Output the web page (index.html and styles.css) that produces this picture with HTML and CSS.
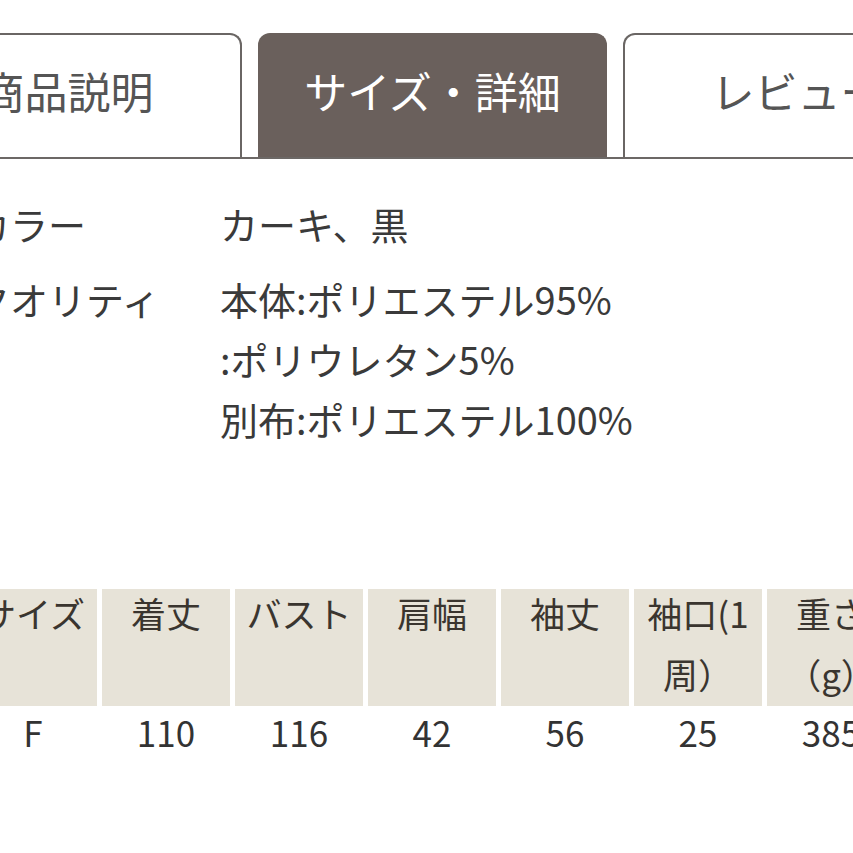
FILE: index.html
```html
<!DOCTYPE html>
<html lang="ja">
<head>
<meta charset="utf-8">
<title>サイズ・詳細</title>
<link rel="stylesheet" href="styles.css">
</head>
<body>
<div class="page">
  <div class="tabs">
    <div class="tab">商品説明</div>
    <div class="tab active">サイズ・詳細</div>
    <div class="tab">レビュー</div>
  </div>

  <dl class="info">
    <dt class="label">カラー</dt>
    <dd class="value">カーキ、黒</dd>
    <dt class="label">クオリティ</dt>
    <dd class="value">本体:ポリエステル95%<br>:ポリウレタン5%<br>別布:ポリエステル100%</dd>
  </dl>

  <table class="size-table">
    <thead>
      <tr>
        <th><span class="th-text">サイズ</span></th>
        <th><span class="th-text">着丈</span></th>
        <th><span class="th-text">バスト</span></th>
        <th><span class="th-text">肩幅</span></th>
        <th><span class="th-text">袖丈</span></th>
        <th><span class="th-text">袖口(1周）</span></th>
        <th><span class="th-text">重さ（g）</span></th>
      </tr>
    </thead>
    <tbody>
      <tr>
        <td>F</td>
        <td>110</td>
        <td>116</td>
        <td>42</td>
        <td>56</td>
        <td>25</td>
        <td>385</td>
      </tr>
    </tbody>
  </table>
</div>
</body>
</html>
```

FILE: styles.css
```css
html, body {
  margin: 0;
  padding: 0;
  background: #ffffff;
  overflow: hidden;
}

body {
  font-family: "Noto Sans CJK JP", "Noto Sans", sans-serif;
  color: #3a3a3a;
}

.page {
  width: 1150px;
  margin-left: -107px;
  padding-top: 33px;
}

/* Tabs */
.tabs {
  display: flex;
  gap: 16px;
  border-bottom: 2px solid #6c6866;
}

.tab {
  flex: 0 0 349px;
  height: 124px;
  box-sizing: border-box;
  border: 2px solid #6a6664;
  border-bottom: none;
  border-radius: 12px 12px 0 0;
  display: flex;
  align-items: center;
  justify-content: center;
  font-size: 43px;
  color: #555555;
  padding-bottom: 12px;
}

.tab.active {
  background: #6a605c;
  border-color: #6a605c;
  color: #ffffff;
}

/* Info */
.info {
  display: grid;
  grid-template-columns: 248px 1fr;
  row-gap: 15px;
  margin: 35px 0 0 79px;
  font-size: 38px;
  line-height: 60px;
  color: #3a3a3a;
}

.info dt,
.info dd {
  margin: 0;
  white-space: nowrap;
}

/* Size table */
.size-table {
  margin: 135px 0 0 71px;
  border-collapse: separate;
  border-spacing: 5px;
  table-layout: fixed;
  color: #3a352f;
}

.size-table th {
  width: 128px;
  height: 117px;
  box-sizing: border-box;
  padding: 0 6px;
  background: #e7e3d8;
  vertical-align: top;
  font-weight: normal;
  font-size: 35px;
  line-height: 61px;
  text-align: center;
}

.th-text {
  display: block;
  margin-top: -7px;
}

.size-table td {
  width: 128px;
  padding: 0;
  font-size: 35px;
  line-height: 42px;
  text-align: center;
  color: #333333;
}
```
